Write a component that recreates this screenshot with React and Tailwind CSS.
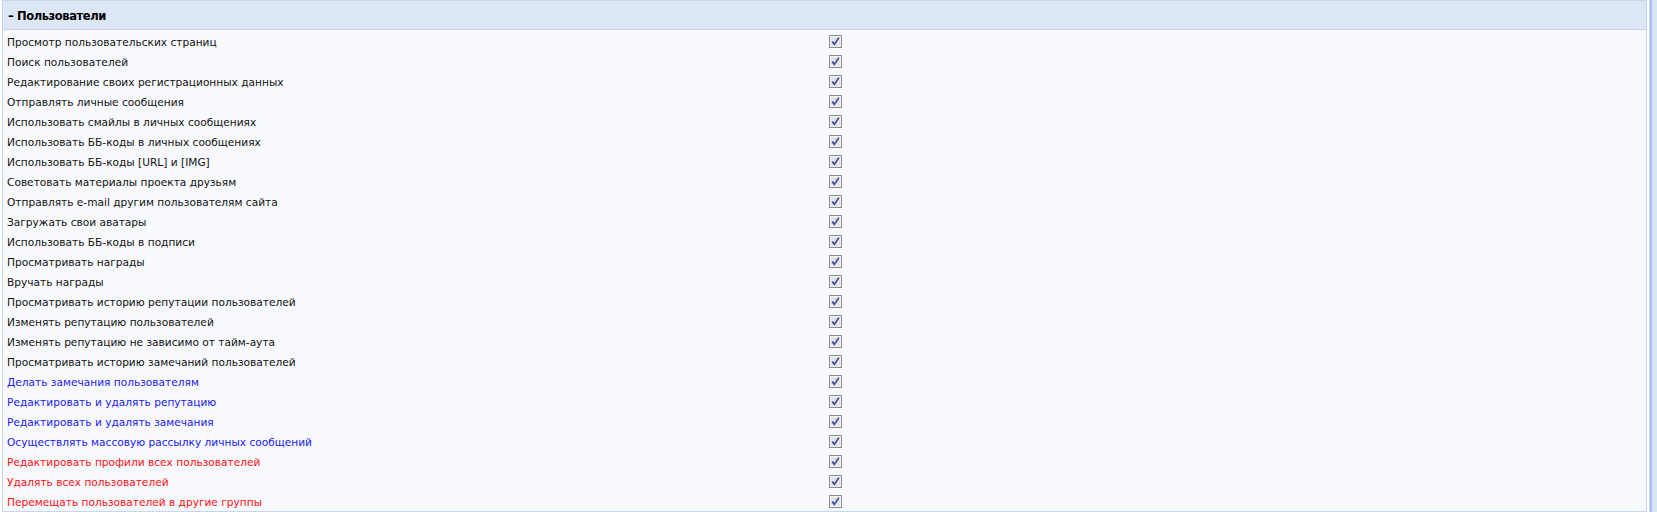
import React from "react";

const perms = [
  { label: "Просмотр пользовательских страниц" },
  { label: "Поиск пользователей" },
  { label: "Редактирование своих регистрационных данных" },
  { label: "Отправлять личные сообщения" },
  { label: "Использовать смайлы в личных сообщениях" },
  { label: "Использовать ББ-коды в личных сообщениях" },
  { label: "Использовать ББ-коды [URL] и [IMG]" },
  { label: "Советовать материалы проекта друзьям" },
  { label: "Отправлять e-mail другим пользователям сайта" },
  { label: "Загружать свои аватары" },
  { label: "Использовать ББ-коды в подписи" },
  { label: "Просматривать награды" },
  { label: "Вручать награды" },
  { label: "Просматривать историю репутации пользователей" },
  { label: "Изменять репутацию пользователей" },
  { label: "Изменять репутацию не зависимо от тайм-аута" },
  { label: "Просматривать историю замечаний пользователей" },
  { label: "Делать замечания пользователям", tone: "blue" },
  { label: "Редактировать и удалять репутацию", tone: "blue" },
  { label: "Редактировать и удалять замечания", tone: "blue" },
  { label: "Осуществлять массовую рассылку личных сообщений", tone: "blue" },
  { label: "Редактировать профили всех пользователей", tone: "red" },
  { label: "Удалять всех пользователей", tone: "red" },
  { label: "Перемещать пользователей в другие группы", tone: "red" },
];

const CheckBox = () => (
  <svg width="13" height="13" viewBox="0 0 13 13">
    <rect x="0.5" y="0.5" width="12" height="12" fill="#e4e4e4" stroke="#8c8c8c" />
    <rect x="1.5" y="1.5" width="10" height="10" fill="none" stroke="#f2f2f2" />
    <path d="M3.2 6.6 L5.4 9.4 L9.8 2.8" fill="none" stroke="#3b4ea3" strokeWidth="1.7" />
  </svg>
);

export default function App() {
  return (
    <div
      className="flex h-[512px] w-full bg-white"
      style={{ fontFamily: "'DejaVu Sans', Verdana, sans-serif" }}
    >
      <div className="ml-[2px] flex h-[512px] flex-1 flex-col border border-[#c6d6ef] bg-[#f7f9fd]">
        {/* section header */}
        <div className="flex h-[29px] items-center border-b border-[#c6d6ef] bg-[#dde6f5] pl-[5px] pt-[4px] text-[11.5px] font-bold tracking-[-0.4px] text-black">
          – Пользователи
        </div>
        <div className="flex flex-col">
          {perms.map((p) => (
            <div key={p.label} className="grid h-[20px] grid-cols-[826px_1fr] items-start">
              <span
                className={
                  "block h-[20px] pl-[4px] pt-[2px] text-[10.6px] leading-[20px] " +
                  (p.tone === "blue"
                    ? "text-[#2020f0]"
                    : p.tone === "red"
                    ? "text-[#ff1010]"
                    : "text-[#111]")
                }
              >
                {p.label}
              </span>
              <div className="flex h-[20px] items-center pt-[3px]">
                <CheckBox />
              </div>
            </div>
          ))}
        </div>
      </div>
      <div className="ml-[2px] flex w-[8px]">
        <div className="w-[1px] bg-[#c8daf5]"></div>
        <div className="w-[2px] bg-[#a7c2ee]"></div>
        <div className="flex-1 bg-[#d9e5f7]"></div>
      </div>
    </div>
  );
}
